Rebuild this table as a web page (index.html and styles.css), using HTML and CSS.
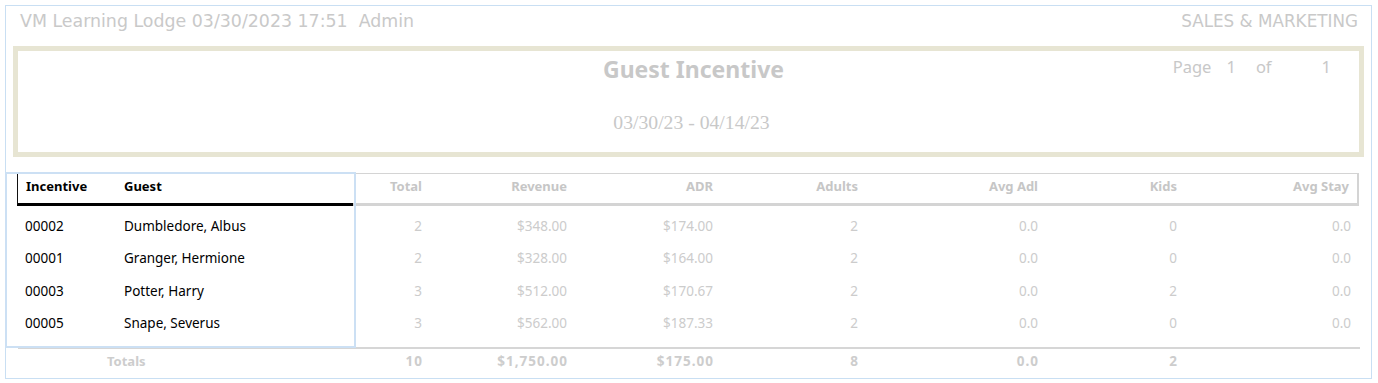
FILE: index.html
```html
<!DOCTYPE html>
<html>
<head>
<meta charset="utf-8">
<link rel="stylesheet" href="styles.css">
</head>
<body>
<div class="page">
  <div class="topbar">
    <span class="top-left">VM Learning Lodge 03/30/2023 17:51&nbsp; Admin</span>
    <span class="top-right">SALES &amp; MARKETING</span>
  </div>
  <div class="title-box">
    <div class="title-spacer"></div>
    <div class="title-center">
      <div class="title">Guest Incentive</div>
      <div class="daterange">03/30/23 - 04/14/23</div>
    </div>
    <div class="pageinfo">
      <span class="pi-label">Page</span><span class="pi-num">1</span><span class="pi-of">of</span><span class="pi-tot">1</span>
    </div>
  </div>
  <div class="report">
    <div class="selection"></div>
    <div class="row head">
      <div class="c dark first">Incentive</div>
      <div class="c dark">Guest</div>
      <div class="c num">Total</div>
      <div class="c num">Revenue</div>
      <div class="c num">ADR</div>
      <div class="c num">Adults</div>
      <div class="c num">Avg Adl</div>
      <div class="c num">Kids</div>
      <div class="c num last">Avg Stay</div>
    </div>
    <div class="body">
      <div class="row data">
        <div class="c txt">00002</div><div class="c txt">Dumbledore, Albus</div>
        <div class="c num">2</div><div class="c num">$348.00</div><div class="c num">$174.00</div><div class="c num">2</div><div class="c num">0.0</div><div class="c num">0</div><div class="c num">0.0</div>
      </div>
      <div class="row data">
        <div class="c txt">00001</div><div class="c txt">Granger, Hermione</div>
        <div class="c num">2</div><div class="c num">$328.00</div><div class="c num">$164.00</div><div class="c num">2</div><div class="c num">0.0</div><div class="c num">0</div><div class="c num">0.0</div>
      </div>
      <div class="row data">
        <div class="c txt">00003</div><div class="c txt">Potter, Harry</div>
        <div class="c num">3</div><div class="c num">$512.00</div><div class="c num">$170.67</div><div class="c num">2</div><div class="c num">0.0</div><div class="c num">2</div><div class="c num">0.0</div>
      </div>
      <div class="row data">
        <div class="c txt">00005</div><div class="c txt">Snape, Severus</div>
        <div class="c num">3</div><div class="c num">$562.00</div><div class="c num">$187.33</div><div class="c num">2</div><div class="c num">0.0</div><div class="c num">0</div><div class="c num">0.0</div>
      </div>
    </div>
    <div class="row totals">
      <div class="c totals-label">Totals</div>
      <div class="c num">10</div><div class="c num">$1,750.00</div><div class="c num">$175.00</div><div class="c num">8</div><div class="c num">0.0</div><div class="c num">2</div><div class="c num"></div>
    </div>
  </div>
</div>
</body>
</html>
```
FILE: styles.css
```css
* { box-sizing: border-box; }
html, body { margin: 0; padding: 0; background: #ffffff; }
body {
  font-family: "Noto Sans", "DejaVu Sans", sans-serif;
  color: #c8c8c8;
}
.page {
  margin: 5px 0 0 5px;
  width: 1367px;
  height: 374px;
  border: 1px solid #c9dff3;
}
.topbar {
  display: flex;
  justify-content: space-between;
  align-items: center;
  height: 30px;
  padding: 0 13px 0 14px;
  font-family: "DejaVu Sans", sans-serif;
  line-height: 30px;
  color: #c9c9c9;
}
.top-left { font-size: 17.4px; }
.top-right { font-size: 16.8px; }
.title-box {
  margin: 10px 7px 0 7px;
  height: 111px;
  border: 5px solid #e7e5d3;
  display: grid;
  grid-template-columns: 1fr auto 1fr;
}
.title-center {
  text-align: center;
  padding-top: 3px;
  padding-left: 10px;
}
.title {
  font-size: 23px;
  font-weight: 700;
  line-height: 30px;
  color: #c8c8c8;
}
.daterange {
  margin-top: 26px;
  padding-right: 4px;
  font-family: "Liberation Serif", "Times New Roman", serif;
  font-size: 19.7px;
  line-height: 24px;
  color: #c8c8c8;
}
.pageinfo {
  display: flex;
  justify-content: flex-end;
  padding: 4px 28px 0 0;
  font-size: 16.5px;
  line-height: 24px;
  color: #c8c8c8;
}
.pi-label { margin-right: 15px; }
.pi-num { margin-right: 20px; }
.pi-of { margin-right: 50px; }

.report {
  position: relative;
  margin: 16px 11px 0 11px;
}
.selection {
  position: absolute;
  left: -12px;
  top: -1px;
  width: 351px;
  height: 176px;
  border: 2px solid #cce0f4;
  pointer-events: none;
}
.row {
  display: grid;
  grid-template-columns: 99px 237px 77px 145px 146px 145px 180px 139px 174px;
  font-size: 13.5px;
}
.c {
  padding: 0 8px;
  white-space: nowrap;
}
.num { text-align: right; }

.head .c {
  height: 33px;
  padding-top: 3px;
  line-height: 18px;
  font-size: 13px;
  font-weight: 700;
  border-top: 1px solid #d4d4d4;
  border-bottom: 3px solid #d4d4d4;
  color: #c6c6c6;
}
.head .c.dark {
  border-top-color: #111111;
  border-bottom-color: #000000;
  color: #000000;
}
.head .c.first { border-left: 1px solid #111111; }
.head .c.last { border-right: 2px solid #d4d4d4; }

.body { padding-top: 4px; padding-bottom: 7px; }
.data .c {
  height: 32.4px;
  line-height: 32px;
  color: #cccccc;
}
.data .c.txt { color: #000000; }

.totals {
  border-top: 2px solid #d6d6d6;
  margin-left: 1px;
  grid-template-columns: 335px 77px 145px 146px 145px 180px 139px 174px;
}
.totals .c {
  line-height: 24px;
  font-weight: 700;
  color: #cdcdcd;
}
.totals .c.num {
  letter-spacing: 1px;
  padding-right: 7px;
}
.totals .totals-label {
  padding-left: 89px;
  font-size: 13px;
}
```
